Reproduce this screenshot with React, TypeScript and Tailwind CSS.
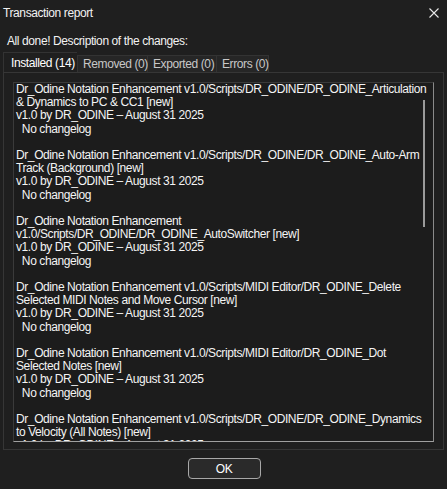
import React from "react";

const entries: string[][] = [
  [
    "Dr_Odine Notation Enhancement v1.0/Scripts/DR_ODINE/DR_ODINE_Articulation",
    "& Dynamics to PC & CC1 [new]",
  ],
  [
    "Dr_Odine Notation Enhancement v1.0/Scripts/DR_ODINE/DR_ODINE_Auto-Arm",
    "Track (Background) [new]",
  ],
  [
    "Dr_Odine Notation Enhancement",
    "v1.0/Scripts/DR_ODINE/DR_ODINE_AutoSwitcher [new]",
  ],
  [
    "Dr_Odine Notation Enhancement v1.0/Scripts/MIDI Editor/DR_ODINE_Delete",
    "Selected MIDI Notes and Move Cursor [new]",
  ],
  [
    "Dr_Odine Notation Enhancement v1.0/Scripts/MIDI Editor/DR_ODINE_Dot",
    "Selected Notes [new]",
  ],
  [
    "Dr_Odine Notation Enhancement v1.0/Scripts/DR_ODINE/DR_ODINE_Dynamics",
    "to Velocity (All Notes) [new]",
  ],
];

export default function App() {
  return (
    <div className="w-[447px] h-[489px] bg-[#1f1f1f] text-[#f2f2f2] font-['Liberation_Sans',Arial,sans-serif] text-[12px] tracking-[-0.4px] flex flex-col overflow-hidden whitespace-nowrap">
      {/* title bar */}
      <div className="h-[26px] flex items-center justify-between pl-[3px] pr-[8px]">
        <span className="leading-[14px]">Transaction report</span>
        <svg width="10" height="10" viewBox="0 0 10 10">
          <path d="M0.5 0.5 L9.5 9.5 M9.5 0.5 L0.5 9.5" stroke="#e8e8e8" strokeWidth="1.1" />
        </svg>
      </div>
      {/* description */}
      <div className="pl-[7px] pt-[8px] leading-[14px] h-[26px]">All done! Description of the changes:</div>
      {/* tabs */}
      <div className="flex items-end h-[20px] pl-[3px]">
        <div className="h-[20px] w-[74px] pl-[7px] flex items-center bg-[#1f1f1f] border-l border-t border-[#333333] text-white">
          Installed (14)
        </div>
        <div className="h-[17px] flex items-center pl-[5px] w-[71px] bg-[#262626] border border-b-0 border-[#333333] text-[#c8c8c8]">
          Removed (0)
        </div>
        <div className="h-[17px] flex items-center pl-[5px] w-[69px] bg-[#262626] border-t border-r border-[#333333] text-[#c8c8c8]">
          Exported (0)
        </div>
        <div className="h-[17px] flex items-center pl-[5px] w-[52px] bg-[#262626] border-t border-r border-[#333333] text-[#c8c8c8]">
          Errors (0)
        </div>
      </div>
      {/* panel */}
      <div className="ml-[3px] w-[441px] h-[378px] border border-[#363636] pt-[9px] pl-[9px] pr-[9px] pb-[7px]">
        <div className="relative w-[421px] h-[360px] bg-[#1c1c1c] border border-t-[#3a3a3a] border-l-[#3a3a3a] border-r-[#8a8a8a] border-b-[#a0a0a0] overflow-hidden">
          <div className="pl-[2px] pt-[0px] leading-[13.2px] whitespace-pre text-[#f4f4f4]">
            {entries.map((e, i) => (
              <div key={i}>
                {e.map((l, j) => (
                  <div key={j}>{l}</div>
                ))}
                <div>v1.0 by DR_ODINE – August 31 2025</div>
                <div>{"  No changelog"}</div>
                <div>{"\u00a0"}</div>
              </div>
            ))}
          </div>
          <div className="absolute right-[8px] top-[17px] w-[2px] h-[127px] bg-[#9a9a9a]" />
        </div>
      </div>
      {/* button */}
      <div className="flex justify-center pt-[8px] pl-[1px]">
        <div className="w-[73px] h-[21px] rounded-[4px] border border-[#a8a8a8] bg-[#2a2a2a] flex items-center justify-center text-white leading-[14px]">
          OK
        </div>
      </div>
    </div>
  );
}
